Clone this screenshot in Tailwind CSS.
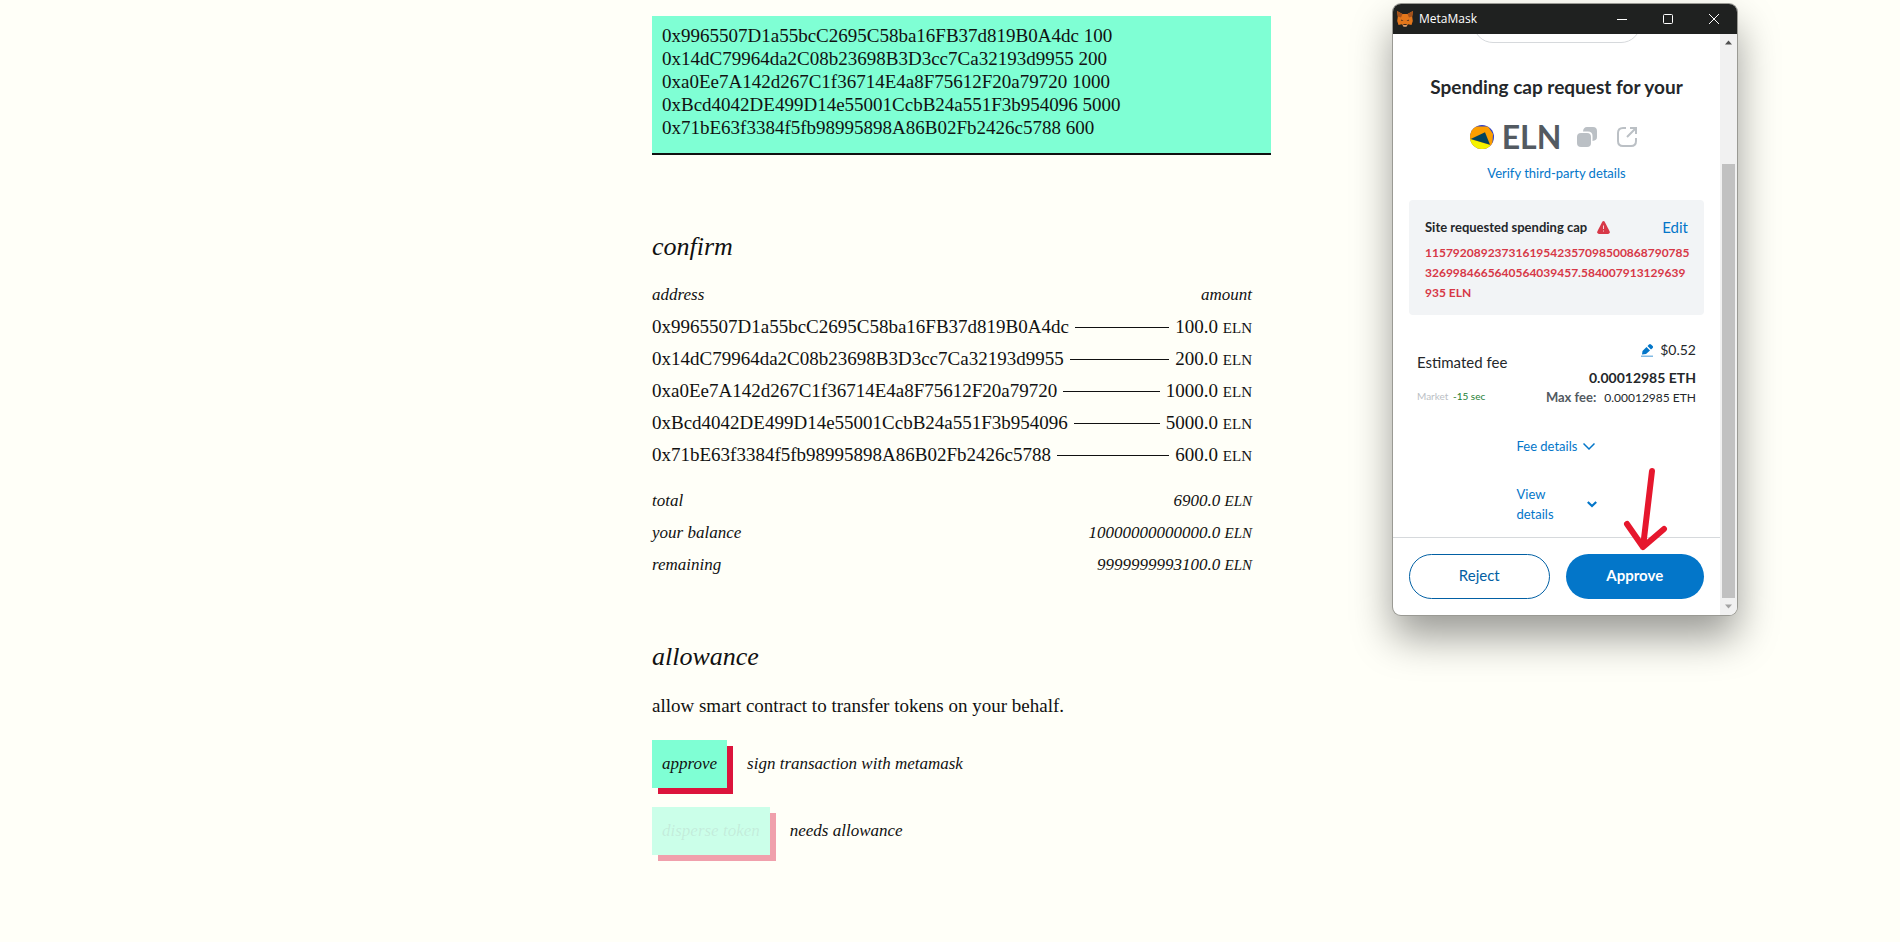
<!DOCTYPE html>
<html lang="en">
<head>
<meta charset="utf-8">
<title>disperse</title>
<script src="https://cdn.jsdelivr.net/npm/@tailwindcss/browser@4"></script>
</head>
<body class="relative min-h-screen overflow-x-hidden bg-[#fffff8] font-['Liberation_Serif',serif] text-[19px] leading-8 text-[#111]">
<main class="mx-auto w-full max-w-[604px] pt-4 pl-1">
  <textarea aria-label="recipients and amounts" rows="5" spellcheck="false" class="block h-[139px] w-[619px] resize-none overflow-hidden border-b-2 border-[#111] bg-[#7fffd4] px-[10px] pt-2 leading-[23px] whitespace-pre outline-none">0x9965507D1a55bcC2695C58ba16FB37d819B0A4dc 100
0x14dC79964da2C08b23698B3D3cc7Ca32193d9955 200
0xa0Ee7A142d267C1f36714E4a8F75612F20a79720 1000
0xBcd4042DE499D14e55001CcbB24a551F3b954096 5000
0x71bE63f3384f5fb98995898A86B02Fb2426c5788 600</textarea>

  <section class="pt-[72px]">
    <h2 class="text-[26px] leading-10 italic">confirm</h2>
    <div class="mt-3 flex justify-between text-[17px] leading-8 italic"><span>address</span><span>amount</span></div>
    <ul>
      <li class="flex h-8 items-center"><span>0x9965507D1a55bcC2695C58ba16FB37d819B0A4dc</span><span class="mx-1.5 h-px grow bg-[#111]"></span><span>100.0 <span class="text-[15px] leading-none">ELN</span></span></li>
      <li class="flex h-8 items-center"><span>0x14dC79964da2C08b23698B3D3cc7Ca32193d9955</span><span class="mx-1.5 h-px grow bg-[#111]"></span><span>200.0 <span class="text-[15px] leading-none">ELN</span></span></li>
      <li class="flex h-8 items-center"><span>0xa0Ee7A142d267C1f36714E4a8F75612F20a79720</span><span class="mx-1.5 h-px grow bg-[#111]"></span><span>1000.0 <span class="text-[15px] leading-none">ELN</span></span></li>
      <li class="flex h-8 items-center"><span>0xBcd4042DE499D14e55001CcbB24a551F3b954096</span><span class="mx-1.5 h-px grow bg-[#111]"></span><span>5000.0 <span class="text-[15px] leading-none">ELN</span></span></li>
      <li class="flex h-8 items-center"><span>0x71bE63f3384f5fb98995898A86B02Fb2426c5788</span><span class="mx-1.5 h-px grow bg-[#111]"></span><span>600.0 <span class="text-[15px] leading-none">ELN</span></span></li>
    </ul>
    <div class="mt-3.5 text-[17px] leading-8 italic">
      <div class="flex justify-between"><span>total</span><span>6900.0 <span class="text-[15px] leading-none">ELN</span></span></div>
      <div class="flex justify-between"><span>your balance</span><span>10000000000000.0 <span class="text-[15px] leading-none">ELN</span></span></div>
      <div class="flex justify-between"><span>remaining</span><span>9999999993100.0 <span class="text-[15px] leading-none">ELN</span></span></div>
    </div>
  </section>

  <section class="pt-14">
    <h2 class="text-[26px] leading-10 italic">allowance</h2>
    <p class="mt-[13px]">allow smart contract to transfer tokens on your behalf.</p>
    <div class="mt-[18px] flex items-center text-[17px] italic">
      <button class="h-12 bg-[#7fffd4] px-[10px] italic shadow-[6px_6px_crimson]">approve</button>
      <span class="ml-5">sign transaction with metamask</span>
    </div>
    <div class="mt-[19px] flex items-center text-[17px] italic">
      <button disabled class="h-12 bg-[#7fffd4] px-[10px] text-[#111]/20 italic opacity-40 shadow-[6px_6px_crimson]">disperse token</button>
      <span class="ml-5">needs allowance</span>
    </div>
  </section>
</main>

<aside aria-label="MetaMask" class="absolute top-1 right-[163px] flex w-[344px] flex-col overflow-hidden rounded-lg bg-white font-[Lato,sans-serif] text-xs leading-5 text-[#24272a] shadow-[0_0_0_1px_#9a9a94,0_22px_40px_rgba(0,0,0,0.4)]">
  <header class="flex h-[30px] items-center bg-[#1f2120] pl-1 text-white">
    <svg class="size-4" viewBox="0 0 16 16"><path fill="#e2761b" d="M0 0l5.500 3h5L16 0l-.8 5.500.6 4.500-1.300 4-3.500-.8L9.500 15.500h-3L5 13.200 1.500 14 .2 10l.6-4.500z"/><path fill="#a5521c" d="M0 0l5.500 3L4 6.500.8 5.500zM16 0l-5.500 3L12 6.500l3.200-1z"/><path fill="#3a2a22" d="M4 8.500l2.500 1.200-2 .4zM12 8.500L9.500 9.700l2 .4zM6.500 13h3l.3 1H6.200z"/><path fill="#d7c1b3" d="M5.500 13.500l1 2h3l1-2-.8 1H6.300z"/></svg>
    <span class="ml-1.5 grow font-['Open_Sans',sans-serif]">MetaMask</span>
    <button aria-label="Minimize" class="grid w-[46px] place-items-center"><svg class="size-3" viewBox="0 0 12 12" stroke="#fff"><path d="M1 6.500h10"/></svg></button>
    <button aria-label="Maximize" class="grid w-[46px] place-items-center"><svg class="size-3" viewBox="0 0 12 12" stroke="#fff" fill="none"><rect x="1.500" y="1.500" width="9" height="9" rx="1"/></svg></button>
    <button aria-label="Close" class="grid w-[46px] place-items-center"><svg class="size-3" viewBox="0 0 12 12" stroke="#fff" fill="none"><path d="M1 1l10 10M11 1L1 11"/></svg></button>
  </header>
  <div class="flex">
    <div class="min-w-0 grow">
      <div class="mx-auto h-[9px] w-[168px] overflow-hidden"><div class="-mt-[31px] h-10 rounded-full border border-[#d6d9dc]"></div></div>
      <h1 class="mt-8 text-center text-[19px] leading-6 font-bold">Spending cap request for your</h1>
      <div class="mt-[18px] flex h-10 items-center justify-center pr-1.5">
        <svg class="size-6" viewBox="0 0 24 24"><defs><clipPath id="token-circle"><circle cx="12" cy="12" r="12"/></clipPath></defs><g clip-path="url(#token-circle)"><path fill="#2f3fc4" d="M0 0h24v24H0z"/><path fill="#fc9e00" d="M0 3L6 1.500 18 1.500 23 9l-1 15H0z"/><path fill="#f5f300" d="M0 14l20 6v4H0z"/><path fill="#03435d" d="M.7 14L15 7.300l5 12.400z"/></g></svg>
        <span class="ml-2 text-[32px] font-bold text-[#535a61]">ELN</span>
        <button aria-label="Copy address" class="ml-4"><svg class="size-5" viewBox="0 0 20 20" fill="#bbc0c5"><rect y="6" width="14" height="14" rx="4"/><path d="M6 4.500C6.300 1.500 7.500 0 10 0h6c2.700 0 4 1.300 4 4v6c0 2.500-1.500 3.700-4.500 4V9c0-3-1.500-4.500-4.500-4.500z"/></svg></button>
        <button aria-label="Open in explorer" class="ml-5"><svg class="size-5" viewBox="0 0 20 20" fill="none" stroke="#bbc0c5" stroke-width="2"><path d="M9 1H6Q1 1 1 6v8q0 5 5 5h8q5 0 5-5v-3M10 10l9-9M13 1h6v6"/></svg></button>
      </div>
      <a href="#" class="mt-1.5 block text-center text-[13px] leading-5 text-[#0376c9]">Verify third-party details</a>
      <div class="mx-4 mt-[17px] h-[115px] rounded bg-[#f2f4f6] px-4 pt-[17px]">
        <div class="flex items-center text-[13px] leading-5 font-bold"><span>Site requested spending cap</span><svg class="ml-2.5 size-[13px]" viewBox="0 0 13 13"><path fill="#d73847" d="M5.300.8q1.200-1.400 2.400 0l5 9.700q.5 2-1.500 2.500H1.800Q-.2 12.500.3 10.500z"/><path stroke="#fff" stroke-opacity=".8" d="M6.500 4.500v3.500M6.500 9.500v1"/></svg><a href="#" class="ml-auto text-[15px] leading-5 font-normal text-[#0376c9]">Edit</a></div>
        <p class="mt-1.5 font-bold whitespace-nowrap text-[#d73847]">11579208923731619542357098500868790785<br>3269984665640564039457.584007913129639<br>935 ELN</p>
      </div>
      <div class="mx-6 mt-[25px] flex justify-between">
        <div class="pt-3"><div class="text-[15px] leading-5">Estimated fee</div><div class="mt-3.5 text-[10px] leading-5 text-[#bbc0c5]">Market <span class="ml-0.5 text-[#1c7e33]">-15 sec</span></div></div>
        <div class="text-right"><div class="flex items-center justify-end gap-1.5 text-sm leading-5"><svg class="size-[13px]" viewBox="0 0 13 13" fill="#0376c9"><path d="M1 10.500l.5-3.500L5.500 3l3.500 3.500L5 10zM6.500 2L8 .5q1-.8 2 0L11.700 2q.7 1 0 2L10 5.500z"/><path opacity=".5" d="M0 11.500h12V13H0z"/></svg>$0.52</div><div class="mt-2 text-sm leading-5 font-bold">0.00012985 ETH</div><div><span class="mr-2 text-[13px] leading-none font-bold text-[#535a61]">Max fee:</span>0.00012985 ETH</div></div>
      </div>
      <button class="mx-auto mt-7 flex w-20 items-center gap-1.5 text-[13px] leading-5 whitespace-nowrap text-[#0376c9]">Fee details<svg class="size-3 shrink-0" viewBox="0 0 12 12" fill="none" stroke="currentColor" stroke-width="1.500"><path d="M.5 3.500L6 9l5.500-5.500"/></svg></button>
      <button class="mx-auto mt-7 flex w-20 items-center justify-between text-left text-[13px] leading-5 text-[#0376c9]"><span class="w-10">View details</span><svg class="size-2.5" viewBox="0 0 10 10" fill="none" stroke="currentColor" stroke-width="2.200"><path d="M.8 3L5 7l4.200-4"/></svg></button>
      <footer class="mt-[13px] flex gap-4 border-t border-[#d6d9dc] p-4 text-[15px] leading-5"><button class="h-[45px] flex-1 rounded-full border border-[#0260a4] pb-1 text-[#0260a4]">Reject</button><button class="h-[45px] flex-1 rounded-full bg-[#0376c9] pb-1 font-bold text-white">Approve</button></footer>
    </div>
    <div class="flex w-[17px] shrink-0 flex-col items-center bg-[#f1f1f1]">
      <svg class="mt-1.5 h-[5px] w-[7px]" viewBox="0 0 7 5"><path fill="#505050" d="M0 4.500L3.500.5 7 4.500z"/></svg>
      <div class="mt-[119px] w-[13px] grow bg-[#c1c1c1]"></div>
      <svg class="my-1.5 h-[5px] w-[7px]" viewBox="0 0 7 5"><path fill="#a3a3a3" d="M0 .5L3.500 4.500 7 .5z"/></svg>
    </div>
  </div>
  <svg class="pointer-events-none absolute top-[460px] left-[229px] h-[90px] w-[46px]" viewBox="0 0 46 90" fill="none" stroke="#e6172d" stroke-width="6" stroke-linecap="round" stroke-linejoin="round"><path d="M30 7l-9 76M5 60l16 23 21-18"/></svg>
</aside>
</body>
</html>
